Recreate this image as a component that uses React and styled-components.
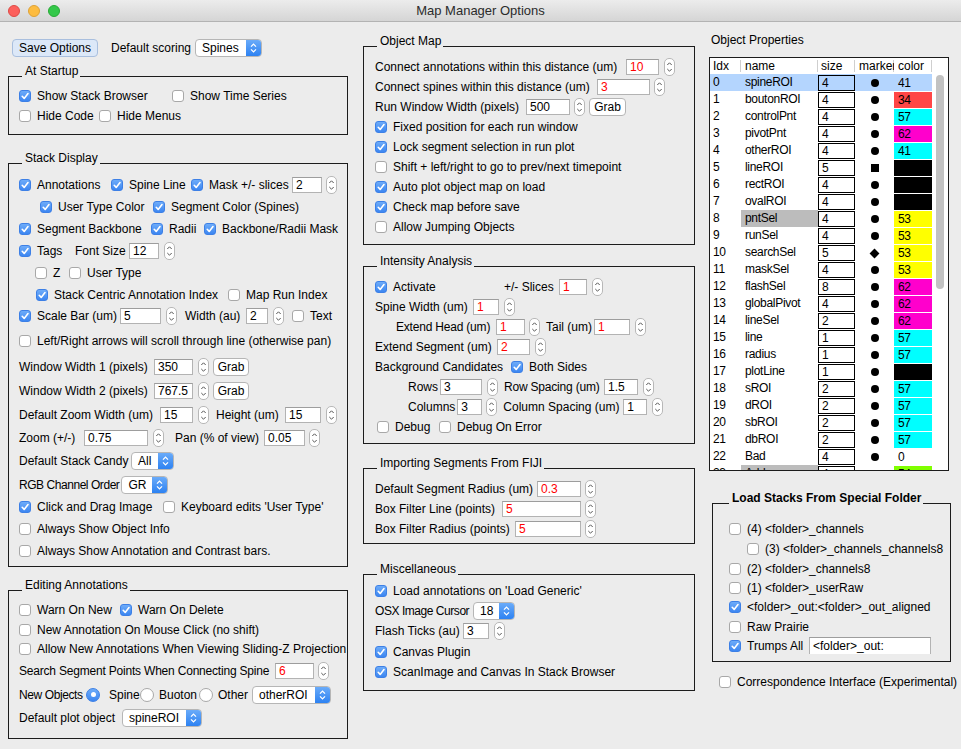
import React from "react";
import styled, { createGlobalStyle } from "styled-components";

const FONT = `"Liberation Sans", Arial, Helvetica, sans-serif`;
const LINE = "#1c1c1c";

const GlobalStyle = createGlobalStyle`
  *, *::before, *::after { box-sizing: border-box; }
  html, body { margin: 0; padding: 0; background: #ececec; }
  body { font-family: ${FONT}; font-size: 12px; color: #000; }
`;

const Window = styled.div`
  width: 961px;
  height: 749px;
  background: #ececec;
  overflow: hidden;
  display: flex;
  flex-direction: column;
`;

const TitleBar = styled.div`
  flex: none;
  height: 22px;
  display: grid;
  grid-template-columns: 1fr auto 1fr;
  align-items: center;
  background: linear-gradient(#ececec, #d5d5d5);
  border-bottom: 1px solid #b3b3b3;
`;

const Lights = styled.div`
  display: flex;
  gap: 8px;
  padding-left: 8px;
`;

const Light = styled.span`
  width: 12px;
  height: 12px;
  border-radius: 50%;
  background: ${(p) => p.$c};
  border: 1px solid ${(p) => p.$b};
`;

const Title = styled.div`
  font-size: 13px;
  color: #2b2b2b;
  line-height: 16px;
`;

const Main = styled.div`
  display: flex;
  align-items: flex-start;
  padding-left: 8px;
`;

const Column = styled.div`
  flex: none;
  display: flex;
  flex-direction: column;
  width: ${(p) => p.$w}px;
  margin-left: ${(p) => p.$ml || 0}px;
  margin-top: ${(p) => p.$mt || 0}px;
`;

const TopBar = styled.div`
  display: flex;
  align-items: center;
  height: 21px;
  margin-top: 15px;
  padding-left: 4px;
`;

/* ---------- group box ---------- */
const GroupWrap = styled.section`
  margin-top: ${(p) => p.$mt}px;
  margin-left: ${(p) => p.$ml || 0}px;
  width: ${(p) => (p.$w ? p.$w + "px" : "auto")};
`;

const GroupHead = styled.div`
  display: flex;
  align-items: flex-end;
  height: 16px;
  &::before {
    content: "";
    flex: none;
    width: ${(p) => p.$lead}px;
    align-self: stretch;
    border-bottom: 1px solid ${LINE};
  }
  &::after {
    content: "";
    flex: 1;
    align-self: stretch;
    border-bottom: 1px solid ${LINE};
  }
`;

const GroupTitle = styled.span`
  padding: 0 2px 0 3px;
  line-height: 14px;
  margin-bottom: -1px;
  white-space: nowrap;
  font-weight: ${(p) => (p.$bold ? 700 : 400)};
`;

const GroupBody = styled.div`
  border: 1px solid ${LINE};
  border-top: none;
  padding: ${(p) => p.$pt}px 0 ${(p) => p.$pb}px ${(p) => p.$pl}px;
`;

function Group({ title, mt, ml, w, pt, pb, pl, lead = 14, bold, children }) {
  return (
    <GroupWrap $mt={mt} $ml={ml} $w={w}>
      <GroupHead $lead={lead}>
        <GroupTitle $bold={bold}>{title}</GroupTitle>
      </GroupHead>
      <GroupBody $pt={pt} $pb={pb} $pl={pl}>
        {children}
      </GroupBody>
    </GroupWrap>
  );
}

/* ---------- rows & widgets ---------- */
const Row = styled.div`
  display: flex;
  align-items: center;
  height: ${(p) => p.$h || 20}px;
  padding-left: ${(p) => p.$in || 0}px;
  margin-top: ${(p) => p.$mt || 0}px;
  white-space: nowrap;
`;

const Label = styled.span`
  flex: none;
  white-space: nowrap;
  min-width: ${(p) => (p.$w ? p.$w + "px" : "0")};
  margin-left: ${(p) => p.$ml || 0}px;
  padding-right: 2px;
  letter-spacing: ${(p) => p.$ls || 0}px;
`;

const CheckItem = styled.label`
  flex: none;
  display: inline-flex;
  align-items: center;
  gap: 6px;
  white-space: nowrap;
  min-width: ${(p) => (p.$w ? p.$w + "px" : "0")};
  margin-left: ${(p) => p.$ml || 0}px;
`;

const CheckBox = styled.span`
  flex: none;
  width: 12px;
  height: 12px;
  border-radius: 3px;
  display: inline-flex;
  align-items: center;
  justify-content: center;
  background: ${(p) => (p.$on ? "linear-gradient(#6eacf9, #3c86f1)" : "#fff")};
  border: 1px solid ${(p) => (p.$on ? "#3d80e6" : "#a8a8a8")};
`;

function Check({ on, w, ml, children }) {
  return (
    <CheckItem $w={w} $ml={ml}>
      <CheckBox $on={on}>
        {on && (
          <svg width="10" height="10" viewBox="0 0 10 10">
            <path d="M2.2 5.3 L4.2 7.4 L8 2.6" fill="none" stroke="#fff" strokeWidth="1.6" strokeLinecap="round" strokeLinejoin="round" />
          </svg>
        )}
      </CheckBox>
      {children && <span>{children}</span>}
    </CheckItem>
  );
}

const RadioItem = styled.label`
  flex: none;
  display: inline-flex;
  align-items: center;
  gap: ${(p) => p.$gap}px;
  min-width: ${(p) => p.$w}px;
  white-space: nowrap;
`;

const RadioDot = styled.span`
  flex: none;
  width: 14px;
  height: 14px;
  border-radius: 50%;
  display: inline-flex;
  align-items: center;
  justify-content: center;
  background: ${(p) => (p.$on ? "linear-gradient(#6eacf9, #3c86f1)" : "#fff")};
  border: 1px solid ${(p) => (p.$on ? "#3d80e6" : "#a8a8a8")};
  &::after {
    content: "";
    display: ${(p) => (p.$on ? "block" : "none")};
    width: 5px;
    height: 5px;
    border-radius: 50%;
    background: #fff;
  }
`;

function Radio({ on, w, gap = 5, children }) {
  return (
    <RadioItem $w={w} $gap={gap}>
      <RadioDot $on={on} />
      <span>{children}</span>
    </RadioItem>
  );
}

const Field = styled.input.attrs({ type: "text", readOnly: true })`
  flex: none;
  width: ${(p) => p.$w}px;
  height: ${(p) => p.$h || 16}px;
  margin: 0;
  margin-left: ${(p) => p.$ml || 0}px;
  padding: 0 3px;
  border: 1px solid #b3b3b3;
  border-top-color: #9d9d9d;
  border-bottom: ${(p) => (p.$open ? "none" : "1px solid #b3b3b3")};
  align-self: ${(p) => (p.$top ? "flex-start" : "center")};
  background: #fff;
  font-family: ${FONT};
  font-size: 12px;
  color: ${(p) => (p.$red ? "#ff0000" : "#000")};
  outline: none;
`;

const StepperBox = styled.span`
  flex: none;
  width: 11px;
  height: 18px;
  margin-left: ${(p) => (p.$ml === undefined ? 5 : p.$ml)}px;
  border: 1px solid #b8b8b8;
  border-radius: 5px;
  background: #fff;
  display: flex;
  align-items: center;
  justify-content: center;
`;

function Stepper({ ml }) {
  return (
    <StepperBox $ml={ml}>
      <svg width="9" height="16" viewBox="0 0 9 16">
        <path d="M2.3 6 L4.5 3.8 L6.7 6" fill="none" stroke="#555" strokeWidth="1" />
        <path d="M2.3 10 L4.5 12.2 L6.7 10" fill="none" stroke="#555" strokeWidth="1" />
      </svg>
    </StepperBox>
  );
}

const PushButton = styled.button`
  flex: none;
  width: ${(p) => p.$w}px;
  height: 18px;
  margin: 0;
  margin-left: ${(p) => p.$ml || 0}px;
  padding: 0;
  border: 1px solid ${(p) => (p.$primary ? "#a9bfde" : "#b5b5b5")};
  border-radius: 4px;
  background: ${(p) => (p.$primary ? "#dce8f8" : "#fff")};
  font-family: ${FONT};
  font-size: 12px;
  line-height: 16px;
  color: #000;
`;

const PopupBox = styled.span`
  flex: none;
  display: inline-flex;
  width: ${(p) => p.$w}px;
  height: 18px;
  margin-left: ${(p) => p.$ml || 0}px;
  border: 1px solid #b6b6b6;
  border-radius: 4px;
  background: #fff;
  overflow: hidden;
`;

const PopupText = styled.span`
  flex: 1;
  padding-left: 6px;
  line-height: 16px;
  white-space: nowrap;
  overflow: hidden;
`;

const PopupArrow = styled.span`
  flex: none;
  width: 15px;
  display: flex;
  align-items: center;
  justify-content: center;
  background: linear-gradient(#6aabf9, #2d82f2);
`;

function Popup({ w, ml, children }) {
  return (
    <PopupBox $w={w} $ml={ml}>
      <PopupText>{children}</PopupText>
      <PopupArrow>
        <svg width="15" height="16" viewBox="0 0 15 16">
          <path d="M5 6.6 L7.5 4.1 L10 6.6" fill="none" stroke="#fff" strokeWidth="1.3" />
          <path d="M5 9.4 L7.5 11.9 L10 9.4" fill="none" stroke="#fff" strokeWidth="1.3" />
        </svg>
      </PopupArrow>
    </PopupBox>
  );
}

/* ---------- object table ---------- */
const PanelLabel = styled.div`
  line-height: 14px;
  padding-left: 2px;
`;

const Table = styled.div`
  width: 240px;
  height: 414px;
  margin-top: 10px;
  border: 1px solid ${LINE};
  background: #fff;
  display: flex;
  flex-direction: column;
  overflow: hidden;
`;

const THead = styled.div`
  flex: none;
  display: flex;
  height: 16px;
`;

const TH = styled.div`
  flex: none;
  width: ${(p) => p.$w}px;
  padding-left: ${(p) => p.$pl}px;
  line-height: 16px;
  white-space: nowrap;
  overflow: hidden;
  background: linear-gradient(#cfcfcf, #cfcfcf) right 2px / 1px 12px no-repeat;
`;

const TBody = styled.div`
  flex: 1;
  display: flex;
  overflow: hidden;
  letter-spacing: -0.3px;
`;

const RowsArea = styled.div`
  flex: none;
  width: 222px;
`;

const TRow = styled.div`
  display: flex;
  height: 17px;
  background: ${(p) => (p.$sel ? "#b4d5fe" : "transparent")};
`;

const TD = styled.div`
  flex: none;
  width: ${(p) => p.$w}px;
  padding-left: ${(p) => p.$pl || 0}px;
  line-height: 17px;
  white-space: nowrap;
  overflow: hidden;
  background: ${(p) => p.$bg || "transparent"};
`;

const SizeBox = styled.div`
  flex: none;
  width: 37px;
  height: 16px;
  margin-top: 1px;
  padding-left: 3px;
  line-height: 14px;
  border: 1px solid #000;
  background: ${(p) => (p.$sel ? "transparent" : "#fff")};
`;

const MarkerCell = styled.div`
  flex: none;
  width: 39px;
  display: flex;
  align-items: center;
  justify-content: center;
  padding-top: 1px;
`;

const Marker = styled.span`
  display: block;
  background: #000;
  width: ${(p) => (p.$shape === "diamond" ? 7 : 8)}px;
  height: ${(p) => (p.$shape === "diamond" ? 7 : 8)}px;
  border-radius: ${(p) => (p.$shape === "dot" ? "50%" : "0")};
  transform: ${(p) => (p.$shape === "diamond" ? "rotate(45deg)" : "none")};
`;

const ColorCell = styled.div`
  flex: none;
  width: 38px;
  height: 16px;
  margin-top: 1px;
  padding-left: 4px;
  line-height: 16px;
  background: ${(p) => p.$bg || "transparent"};
`;

const ScrollTrack = styled.div`
  flex: 1;
  padding: 1px 0 0 4px;
  background: #fff;
`;

const Thumb = styled.div`
  width: 8px;
  height: 214px;
  border-radius: 4px;
  background: #c2c2c2;
`;

const RED = "#ff4646";
const CYAN = "#00ffff";
const MAG = "#ff00cc";
const YEL = "#ffff00";
const BLK = "#000000";
const GRN = "#80ff00";

const objects = [
  ["0", "spineROI", "4", "dot", "41", null],
  ["1", "boutonROI", "4", "dot", "34", RED],
  ["2", "controlPnt", "4", "dot", "57", CYAN],
  ["3", "pivotPnt", "4", "dot", "62", MAG],
  ["4", "otherROI", "4", "dot", "41", CYAN],
  ["5", "lineROI", "5", "square", "", BLK],
  ["6", "rectROI", "4", "dot", "", BLK],
  ["7", "ovalROI", "4", "dot", "", BLK],
  ["8", "pntSel", "4", "dot", "53", YEL],
  ["9", "runSel", "4", "dot", "53", YEL],
  ["10", "searchSel", "5", "diamond", "53", YEL],
  ["11", "maskSel", "4", "dot", "53", YEL],
  ["12", "flashSel", "8", "dot", "62", MAG],
  ["13", "globalPivot", "4", "dot", "62", MAG],
  ["14", "lineSel", "2", "dot", "62", MAG],
  ["15", "line", "1", "dot", "57", CYAN],
  ["16", "radius", "1", "dot", "57", CYAN],
  ["17", "plotLine", "1", "dot", "", BLK],
  ["18", "sROI", "2", "dot", "57", CYAN],
  ["19", "dROI", "2", "dot", "57", CYAN],
  ["20", "sbROI", "2", "dot", "57", CYAN],
  ["21", "dbROI", "2", "dot", "57", CYAN],
  ["22", "Bad", "4", "dot", "0", null],
  ["23", "Add", "4", "dot", "54", GRN],
];

const grayNames = { 8: true, 23: true };

function ObjectTable() {
  return (
    <Table>
      <THead>
        <TH $w={31} $pl={3}>Idx</TH>
        <TH $w={77} $pl={4}>name</TH>
        <TH $w={37} $pl={3}>size</TH>
        <TH $w={39} $pl={4}>marker</TH>
        <TH $w={38} $pl={4}>color</TH>
      </THead>
      <TBody>
        <RowsArea>
          {objects.map(([idx, name, size, shape, code, bg], i) => (
            <TRow key={idx} $sel={i === 0}>
              <TD $w={31} $pl={3}>{idx}</TD>
              <TD $w={77} $pl={4} $bg={grayNames[i] ? "#bcbcbc" : null}>{name}</TD>
              <SizeBox $sel={i === 0}>{size}</SizeBox>
              <MarkerCell>
                <Marker $shape={shape} />
              </MarkerCell>
              <ColorCell $bg={bg}>{code}</ColorCell>
            </TRow>
          ))}
        </RowsArea>
        <ScrollTrack>
          <Thumb />
        </ScrollTrack>
      </TBody>
    </Table>
  );
}

export default function App() {
  return (
    <>
      <GlobalStyle />
      <Window>
        <TitleBar>
          <Lights>
            <Light $c="#fc605c" $b="#de4a45" />
            <Light $c="#fdbc40" $b="#dea236" />
            <Light $c="#34c84a" $b="#27aa35" />
          </Lights>
          <Title>Map Manager Options</Title>
          <span />
        </TitleBar>

        <Main>
          {/* ----- column 1 ----- */}
          <Column $w={340}>
            <TopBar>
              <PushButton $primary $w={86}>Save Options</PushButton>
              <Label $ml={13} $w={84}>Default scoring</Label>
              <Popup w={67}>Spines</Popup>
            </TopBar>

            <Group title="At Startup" mt={3} pt={9} pb={8} pl={10}>
              <Row>
                <Check on w={153}>Show Stack Browser</Check>
                <Check>Show Time Series</Check>
              </Row>
              <Row>
                <Check w={80}>Hide Code</Check>
                <Check>Hide Menus</Check>
              </Row>
            </Group>

            <Group title="Stack Display" mt={13} pt={10} pb={5} pl={10}>
              <Row $h={22}>
                <Check on w={92}>Annotations</Check>
                <Check on w={80}>Spine Line</Check>
                <Check on w={101}>Mask +/- slices</Check>
                <Field $w={30} value="2" />
                <Stepper ml={4} />
              </Row>
              <Row $h={22} $in={21}>
                <Check on w={113}>User Type Color</Check>
                <Check on>Segment Color (Spines)</Check>
              </Row>
              <Row $h={22}>
                <Check on w={132}>Segment Backbone</Check>
                <Check on w={53}>Radii</Check>
                <Check on>Backbone/Radii Mask</Check>
              </Row>
              <Row $h={22}>
                <Check on w={56}>Tags</Check>
                <Label $w={54}>Font Size</Label>
                <Field $w={30} value="12" />
                <Stepper ml={5} />
              </Row>
              <Row $h={22} $in={16}>
                <Check w={34}>Z</Check>
                <Check>User Type</Check>
              </Row>
              <Row $h={21} $in={17}>
                <Check on w={192}>Stack Centric Annotation Index</Check>
                <Check>Map Run Index</Check>
              </Row>
              <Row $h={22}>
                <Check on w={101}>Scale Bar (um)</Check>
                <Field $w={41} value="5" />
                <Stepper ml={5} />
                <Label $ml={8} $w={61}>Width (au)</Label>
                <Field $w={22} value="2" />
                <Stepper ml={5} />
                <Check ml={8}>Text</Check>
              </Row>
              <Row $h={28}>
                <Check>Left/Right arrows will scroll through line (otherwise pan)</Check>
              </Row>
              <Row $h={24}>
                <Label $w={135}>Window Width 1 (pixels)</Label>
                <Field $w={39} value="350" />
                <Stepper ml={5} />
                <PushButton $ml={4} $w={36}>Grab</PushButton>
              </Row>
              <Row $h={24}>
                <Label $w={135}>Window Width 2 (pixels)</Label>
                <Field $w={39} value="767.5" />
                <Stepper ml={5} />
                <PushButton $ml={4} $w={36}>Grab</PushButton>
              </Row>
              <Row $h={23}>
                <Label $w={141}>Default Zoom Width (um)</Label>
                <Field $w={33} value="15" />
                <Stepper ml={5} />
                <Label $ml={7} $w={69}>Height (um)</Label>
                <Field $w={36} value="15" />
                <Stepper ml={5} />
              </Row>
              <Row $h={23}>
                <Label $w={65}>Zoom (+/-)</Label>
                <Field $w={64} value="0.75" />
                <Stepper ml={5} />
                <Label $ml={11} $w={89}>Pan (% of view)</Label>
                <Field $w={41} value="0.05" />
                <Stepper ml={4} />
              </Row>
              <Row $h={24}>
                <Label $w={112}>Default Stack Candy</Label>
                <Popup w={43}>All</Popup>
              </Row>
              <Row $h={23}>
                <Label $w={102} $ls={-0.45}>RGB Channel Order</Label>
                <Popup w={47}>GR</Popup>
              </Row>
              <Row $h={22}>
                <Check on w={144}>Click and Drag Image</Check>
                <Check>Keyboard edits 'User Type'</Check>
              </Row>
              <Row $h={22}>
                <Check>Always Show Object Info</Check>
              </Row>
              <Row $h={21}>
                <Check>Always Show Annotation and Contrast bars.</Check>
              </Row>
            </Group>

            <Group title="Editing Annotations" mt={8} pt={8} pb={7} pl={10}>
              <Row $h={21}>
                <Check w={101}>Warn On New</Check>
                <Check on>Warn On Delete</Check>
              </Row>
              <Row $h={19}>
                <Check>New Annotation On Mouse Click (no shift)</Check>
              </Row>
              <Row $h={19}>
                <Check>Allow New Annotations When Viewing Sliding-Z Projection</Check>
              </Row>
              <Row $h={26}>
                <Label $w={256} $ls={-0.2}>Search Segment Points When Connecting Spine</Label>
                <Field $w={39} $red value="6" />
                <Stepper ml={4} />
              </Row>
              <Row $h={21}>
                <Label $w={67} $ls={-0.4}>New Objects</Label>
                <Radio on w={54} gap={9}>Spine</Radio>
                <Radio w={59}>Buoton</Radio>
                <Radio w={53}>Other</Radio>
                <Popup w={79}>otherROI</Popup>
              </Row>
              <Row $h={26}>
                <Label $w={103}>Default plot object</Label>
                <Popup w={80}>spineROI</Popup>
              </Row>
            </Group>
          </Column>

          {/* ----- column 2 ----- */}
          <Column $w={332} $ml={15} $mt={9}>
            <Group title="Object Map" mt={0} pt={10} pb={7} pl={11}>
              <Row>
                <Label $w={251}>Connect annotations within this distance (um)</Label>
                <Field $w={33} $red value="10" />
                <Stepper ml={5} />
              </Row>
              <Row>
                <Label $w={222}>Connect spines within this distance (um)</Label>
                <Field $w={53} $red value="3" />
                <Stepper ml={4} />
              </Row>
              <Row>
                <Label $w={151}>Run Window Width (pixels)</Label>
                <Field $w={44} value="500" />
                <Stepper ml={4} />
                <PushButton $ml={4} $w={37}>Grab</PushButton>
              </Row>
              <Row><Check on>Fixed position for each run window</Check></Row>
              <Row><Check on>Lock segment selection in run plot</Check></Row>
              <Row><Check>Shift + left/right to go to prev/next timepoint</Check></Row>
              <Row><Check on>Auto plot object map on load</Check></Row>
              <Row><Check on>Check map before save</Check></Row>
              <Row><Check>Allow Jumping Objects</Check></Row>
            </Group>

            <Group title="Intensity Analysis" mt={6} pt={10} pb={6} pl={11}>
              <Row>
                <Check on w={129}>Activate</Check>
                <Label $w={55}>+/- Slices</Label>
                <Field $w={28} $red value="1" />
                <Stepper ml={5} />
              </Row>
              <Row>
                <Label $w={98}>Spine Width (um)</Label>
                <Field $w={26} $red value="1" />
                <Stepper ml={5} />
              </Row>
              <Row $in={21}>
                <Label $w={100} $ls={-0.2}>Extend Head (um)</Label>
                <Field $w={29} $red value="1" />
                <Stepper ml={4} />
                <Label $ml={6} $w={48}>Tail (um)</Label>
                <Field $w={36} $red value="1" />
                <Stepper ml={5} />
              </Row>
              <Row>
                <Label $w={122}>Extend Segment (um)</Label>
                <Field $w={33} $red value="2" />
                <Stepper ml={5} />
              </Row>
              <Row>
                <Label $w={136}>Background Candidates</Label>
                <Check on>Both Sides</Check>
              </Row>
              <Row $in={33}>
                <Label $w={31}>Rows</Label>
                <Field $w={42} value="3" />
                <Stepper ml={5} />
                <Label $ml={6} $w={100} $ls={-0.2}>Row Spacing (um)</Label>
                <Field $w={34} value="1.5" />
                <Stepper ml={5} />
              </Row>
              <Row $in={33}>
                <Label $w={49}>Columns</Label>
                <Field $w={25} value="3" />
                <Stepper ml={4} />
                <Label $ml={6} $w={120}>Column Spacing (um)</Label>
                <Field $w={24} value="1" />
                <Stepper ml={5} />
              </Row>
              <Row $in={2}>
                <Check w={62}>Debug</Check>
                <Check>Debug On Error</Check>
              </Row>
            </Group>

            <Group title="Importing Segments From FIJI" mt={9} pt={10} pb={4} pl={11}>
              <Row>
                <Label $w={162}>Default Segment Radius (um)</Label>
                <Field $w={44} $red value="0.3" />
                <Stepper ml={4} />
              </Row>
              <Row>
                <Label $w={127}>Box Filter Line (points)</Label>
                <Field $w={79} $red value="5" />
                <Stepper ml={4} />
              </Row>
              <Row>
                <Label $w={140}>Box Filter Radius (points)</Label>
                <Field $w={66} $red value="5" />
                <Stepper ml={4} />
              </Row>
            </Group>

            <Group title="Miscellaneous" mt={15} pt={6} pb={9} pl={11}>
              <Row><Check on>Load annotations on 'Load Generic'</Check></Row>
              <Row>
                <Label $w={98} $ls={-0.45}>OSX Image Cursor</Label>
                <Popup w={42}>18</Popup>
              </Row>
              <Row>
                <Label $w={88}>Flash Ticks (au)</Label>
                <Field $w={26} value="3" />
                <Stepper ml={5} />
              </Row>
              <Row $h={21}><Check on>Canvas Plugin</Check></Row>
              <Row $h={19}><Check on>ScanImage and Canvas In Stack Browser</Check></Row>
            </Group>
          </Column>

          {/* ----- column 3 ----- */}
          <Column $w={242} $ml={14} $mt={11}>
            <PanelLabel>Object Properties</PanelLabel>
            <ObjectTable />

            <Group title="Load Stacks From Special Folder" bold lead={17} mt={17} ml={3} w={239} pt={14} pb={6} pl={16}>
              <Row $h={21}><Check>(4) &lt;folder&gt;_channels</Check></Row>
              <Row $h={20} $in={18}><Check>(3) &lt;folder&gt;_channels_channels8</Check></Row>
              <Row $h={19}><Check>(2) &lt;folder&gt;_channels8</Check></Row>
              <Row $h={19}><Check>(1) &lt;folder&gt;_userRaw</Check></Row>
              <Row $h={20}><Check on>&lt;folder&gt;_out:&lt;folder&gt;_out_aligned</Check></Row>
              <Row $h={20}><Check>Raw Prairie</Check></Row>
              <Row $h={18}>
                <Check on w={80}>Trumps All</Check>
                <Field $w={122} $h={17} $open $top value="<folder>_out:" />
              </Row>
            </Group>

            <Row $h={20} $in={10} $mt={10}>
              <Check>Correspondence Interface (Experimental)</Check>
            </Row>
          </Column>
        </Main>
      </Window>
    </>
  );
}
